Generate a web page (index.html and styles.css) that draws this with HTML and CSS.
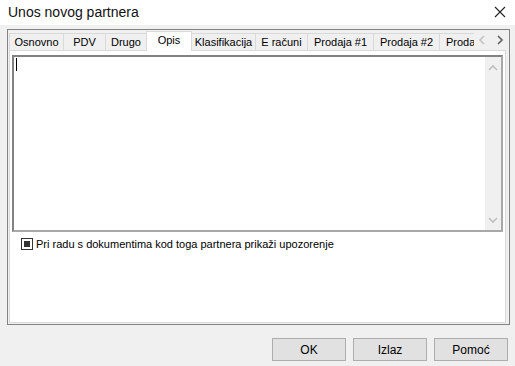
FILE: index.html
```html
<!DOCTYPE html>
<html lang="hr">
<head>
    <meta charset="UTF-8">
    <title>Unos novog partnera</title>
    <link rel="stylesheet" href="styles.css">
</head>
<body>
    <div class="window">
        <div class="titlebar">
            <span class="title">Unos novog partnera</span>
            <svg class="close" width="12" height="12" viewBox="0 0 12 12">
                <path d="M1 1 L11 11 M11 1 L1 11" stroke="#222" stroke-width="1.1" fill="none"/>
            </svg>
        </div>
        <div class="content">
            <div class="frame">
                <div class="tabstrip">
                    <div class="tabs">
                        <div class="tab w-osn">Osnovno</div>
                        <div class="tab w-pdv">PDV</div>
                        <div class="tab w-dru">Drugo</div>
                        <div class="tab active w-opis">Opis</div>
                        <div class="tab w-kla">Klasifikacija</div>
                        <div class="tab w-era">E računi</div>
                        <div class="tab w-pro">Prodaja #1</div>
                        <div class="tab w-pro">Prodaja #2</div>
                        <div class="tab w-last">Proda</div>
                    </div>
                    <div class="scroll-arrows">
                        <svg width="8" height="10" viewBox="0 0 8 10"><path d="M6 1 L2 5 L6 9" stroke="#c4c4c4" stroke-width="1.6" fill="none"/></svg>
                        <svg width="8" height="10" viewBox="0 0 8 10"><path d="M2 1 L6 5 L2 9" stroke="#606060" stroke-width="1.6" fill="none"/></svg>
                    </div>
                </div>
                <div class="panel">
                    <div class="memo">
                        <div class="memo-text"><span class="caret"></span></div>
                        <div class="vscroll">
                            <svg width="10" height="7" viewBox="0 0 10 7"><path d="M1 6 L5 2 L9 6" stroke="#c0c0c0" stroke-width="1.6" fill="none"/></svg>
                            <svg width="10" height="7" viewBox="0 0 10 7"><path d="M1 1 L5 5 L9 1" stroke="#c0c0c0" stroke-width="1.6" fill="none"/></svg>
                        </div>
                    </div>
                    <label class="check">
                        <span class="box"><span class="mark"></span></span>
                        Pri radu s dokumentima kod toga partnera prikaži upozorenje
                    </label>
                </div>
            </div>
            <div class="buttons">
                <button class="btn">OK</button>
                <button class="btn">Izlaz</button>
                <button class="btn">Pomoć</button>
            </div>
        </div>
    </div>
</body>
</html>
```

FILE: styles.css
```css
html, body {
    margin: 0;
    padding: 0;
}
body {
    width: 515px;
    height: 366px;
    overflow: hidden;
    background-color: #f0f0f0;
    font-family: "Liberation Sans", Arial, sans-serif;
    font-size: 11px;
    color: #000;
}
.window {
    display: flex;
    flex-direction: column;
    height: 366px;
}
.titlebar {
    height: 25px;
    background-color: #fff;
    display: flex;
    align-items: center;
    justify-content: space-between;
    padding: 0 8px 0 8px;
}
.title {
    font-size: 14px;
    margin-top: -1px;
    color: #111;
}
.close {
    margin-right: 1px;
    margin-top: -2px;
}
.content {
    flex: 1;
    display: flex;
    flex-direction: column;
    padding: 4px 5px 0 7px;
}
.frame {
    height: 290px;
    border: 1px solid #838383;
    padding: 3px 3px 1px 1px;
    display: flex;
    flex-direction: column;
}
.tabstrip {
    height: 17px;
    display: flex;
    position: relative;
    z-index: 1;
}
.tabs {
    display: flex;
    width: 465px;
    height: 20px;
    margin-top: -3px;
    padding-bottom: 1px;
    overflow: hidden;
    align-items: flex-end;
}
.tab {
    flex: none;
    height: 17px;
    box-sizing: border-box;
    border: 1px solid #d9d9d9;
    border-left: none;
    border-bottom: none;
    background-color: #f0f0f0;
    text-align: center;
    line-height: 16px;
    white-space: nowrap;
    overflow: hidden;
}
.tab:first-child {
    border-left: 1px solid #d9d9d9;
}
.tab.active {
    height: 20px;
    margin-bottom: -1px;
    background-color: #fff;
    border-left: 1px solid #d9d9d9;
    margin-left: -1px;
    line-height: 17px;
}
.w-osn { width: 55px; }
.w-pdv { width: 42px; }
.w-dru { width: 41px; }
.w-opis { width: 46px; }
.w-kla { width: 64px; }
.w-era { width: 52px; }
.w-pro { width: 66px; }
.w-last {
    width: 34px;
    text-align: left;
    padding-left: 6px;
    border-right: none;
}
.scroll-arrows {
    flex: 1;
    display: flex;
    align-items: center;
    justify-content: flex-end;
    gap: 10px;
    padding-right: 2px;
    margin-top: -3px;
}
.panel {
    flex: 1;
    background-color: #fff;
    border: 1px solid #d9d9d9;
    padding: 4px 2px 0 2px;
    display: flex;
    flex-direction: column;
}
.memo {
    height: 173px;
    border: 2px solid #828282;
    border-right-color: #a8a8a8;
    border-bottom-color: #a8a8a8;
    display: flex;
}
.memo-text {
    flex: 1;
    padding: 1px 2px;
}
.caret {
    display: block;
    width: 1px;
    height: 13px;
    background-color: #000;
}
.vscroll {
    width: 16px;
    background-color: #f0f0f0;
    display: flex;
    flex-direction: column;
    align-items: center;
    justify-content: space-between;
    padding: 7px 0 6px 0;
}
.check {
    display: flex;
    align-items: center;
    gap: 3px;
    margin: 6px 0 0 9px;
    font-size: 11px;
}
.box {
    width: 10px;
    height: 10px;
    border: 1px solid #333;
    background-color: #fff;
    display: flex;
    align-items: center;
    justify-content: center;
}
.mark {
    width: 6px;
    height: 6px;
    background-color: #333;
}
.buttons {
    display: flex;
    justify-content: flex-end;
    gap: 7px;
    margin-top: 13px;
    padding-right: 2px;
}
.btn {
    width: 74px;
    height: 23px;
    background-color: #e1e1e1;
    border: 1px solid #adadad;
    font-family: "Liberation Sans", Arial, sans-serif;
    font-size: 12px;
    color: #000;
    padding: 0;
}
```
